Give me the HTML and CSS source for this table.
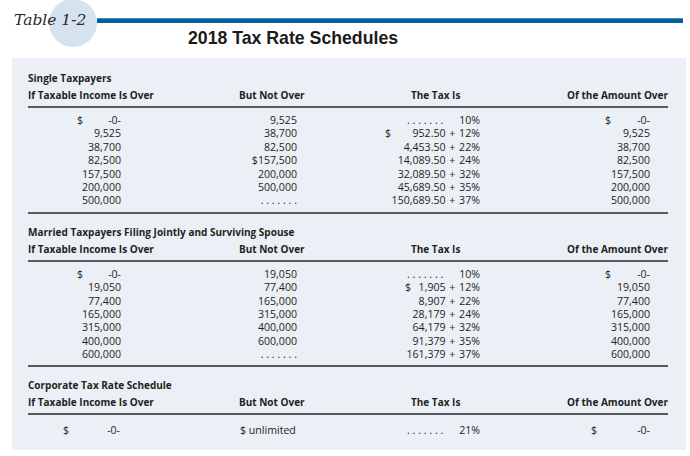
FILE: index.html
```html
<!DOCTYPE html>
<html>
<head>
<meta charset="utf-8">
<link rel="stylesheet" href="styles.css">
</head>
<body>
<div class="top">
  <div class="tagrow">
    <div class="tag"><span class="tag-text">Table 1-2</span></div>
    <div class="rule"></div>
  </div>
  <h1 class="title">2018 Tax Rate Schedules</h1>
</div>
<div class="panel">
  <section class="sec">
    <div class="sec-title">Single Taxpayers</div>
    <div class="grid head">
      <div class="h1">If Taxable Income Is Over</div>
      <div class="h2">But Not Over</div>
      <div class="h3">The Tax Is</div>
      <div class="h4">Of the Amount Over</div>
    </div>
    <div class="rows">
      <div class="grid row"><div class="c1"><span>$</span><span class="n">-0-</span></div><div class="c2">9,525</div><div class="c3 dot"><span class="dots">.......</span><span class="n">10%</span></div><div class="c4"><span>$</span><span class="n">-0-</span></div></div>
      <div class="grid row"><div class="c1"><span class="n">9,525</span></div><div class="c2">38,700</div><div class="c3 dl"><span>$</span><span class="n">952.50 + 12%</span></div><div class="c4"><span class="n">9,525</span></div></div>
      <div class="grid row"><div class="c1"><span class="n">38,700</span></div><div class="c2">82,500</div><div class="c3"><span class="n">4,453.50 + 22%</span></div><div class="c4"><span class="n">38,700</span></div></div>
      <div class="grid row"><div class="c1"><span class="n">82,500</span></div><div class="c2">$157,500</div><div class="c3"><span class="n">14,089.50 + 24%</span></div><div class="c4"><span class="n">82,500</span></div></div>
      <div class="grid row"><div class="c1"><span class="n">157,500</span></div><div class="c2">200,000</div><div class="c3"><span class="n">32,089.50 + 32%</span></div><div class="c4"><span class="n">157,500</span></div></div>
      <div class="grid row"><div class="c1"><span class="n">200,000</span></div><div class="c2">500,000</div><div class="c3"><span class="n">45,689.50 + 35%</span></div><div class="c4"><span class="n">200,000</span></div></div>
      <div class="grid row"><div class="c1"><span class="n">500,000</span></div><div class="c2"><span class="dots">.......</span></div><div class="c3"><span class="n">150,689.50 + 37%</span></div><div class="c4"><span class="n">500,000</span></div></div>
    </div>
  </section>

  <section class="sec">
    <div class="sec-title">Married Taxpayers Filing Jointly and Surviving Spouse</div>
    <div class="grid head">
      <div class="h1">If Taxable Income Is Over</div>
      <div class="h2">But Not Over</div>
      <div class="h3">The Tax Is</div>
      <div class="h4">Of the Amount Over</div>
    </div>
    <div class="rows">
      <div class="grid row"><div class="c1"><span>$</span><span class="n">-0-</span></div><div class="c2">19,050</div><div class="c3 dot"><span class="dots">.......</span><span class="n">10%</span></div><div class="c4"><span>$</span><span class="n">-0-</span></div></div>
      <div class="grid row"><div class="c1"><span class="n">19,050</span></div><div class="c2">77,400</div><div class="c3"><span class="n">$&nbsp;&nbsp;1,905 + 12%</span></div><div class="c4"><span class="n">19,050</span></div></div>
      <div class="grid row"><div class="c1"><span class="n">77,400</span></div><div class="c2">165,000</div><div class="c3"><span class="n">8,907 + 22%</span></div><div class="c4"><span class="n">77,400</span></div></div>
      <div class="grid row"><div class="c1"><span class="n">165,000</span></div><div class="c2">315,000</div><div class="c3"><span class="n">28,179 + 24%</span></div><div class="c4"><span class="n">165,000</span></div></div>
      <div class="grid row"><div class="c1"><span class="n">315,000</span></div><div class="c2">400,000</div><div class="c3"><span class="n">64,179 + 32%</span></div><div class="c4"><span class="n">315,000</span></div></div>
      <div class="grid row"><div class="c1"><span class="n">400,000</span></div><div class="c2">600,000</div><div class="c3"><span class="n">91,379 + 35%</span></div><div class="c4"><span class="n">400,000</span></div></div>
      <div class="grid row"><div class="c1"><span class="n">600,000</span></div><div class="c2"><span class="dots">.......</span></div><div class="c3"><span class="n">161,379 + 37%</span></div><div class="c4"><span class="n">600,000</span></div></div>
    </div>
  </section>

  <section class="sec last">
    <div class="sec-title">Corporate Tax Rate Schedule</div>
    <div class="grid head">
      <div class="h1">If Taxable Income Is Over</div>
      <div class="h2">But Not Over</div>
      <div class="h3">The Tax Is</div>
      <div class="h4">Of the Amount Over</div>
    </div>
    <div class="rows corp">
      <div class="grid row"><div class="c1 wide"><span>$</span><span class="n">-0-</span></div><div class="c2 left">$ unlimited</div><div class="c3 dot"><span class="dots">.......</span><span class="n">21%</span></div><div class="c4 wide"><span>$</span><span class="n">-0-</span></div></div>
    </div>
  </section>
</div>
</body>
</html>
```

FILE: styles.css
```css
html, body {
  margin: 0;
  padding: 0;
  background: #ffffff;
}
body {
  width: 690px;
  height: 456px;
  overflow: hidden;
  color: #231f20;
  font-family: "Open Sans", Lato, sans-serif;
}

.top {
  height: 58px;
}
.tagrow {
  display: flex;
  align-items: flex-start;
}
.tag {
  position: relative;
  width: 83px;
  height: 30px;
  padding-left: 14px;
}
.tag::before {
  content: "";
  position: absolute;
  left: 49px;
  top: -1px;
  width: 48px;
  height: 48px;
  border-radius: 50%;
  background: #d6e3ef;
}
.tag-text {
  position: relative;
  display: block;
  padding-top: 11px;
  font-family: "DejaVu Serif", "Liberation Serif", serif;
  font-style: italic;
  font-size: 15.5px;
  line-height: 18px;
  color: #2a2a2a;
  white-space: nowrap;
}
.rule {
  flex: 1;
  height: 5px;
  margin-top: 18px;
  margin-right: 7px;
  background: #00609c;
  border-top: 1px solid #4a8cc0;
  box-sizing: border-box;
}
.title {
  margin: -2px 0 0 188px;
  font-family: "Liberation Sans", Arial, sans-serif;
  font-weight: bold;
  font-size: 17.7px;
  line-height: 20px;
  color: #1e1a1b;
}

.panel {
  margin: 0 4px 0 12px;
  height: 392px;
  background: #ebeff6;
  padding: 13px 0 0 16px;
  box-sizing: border-box;
}
.sec {
  width: 640px;
  margin-bottom: 11px;
}
.sec-title {
  font-weight: bold;
  font-size: 10px;
  line-height: 14px;
}
.grid {
  display: grid;
  grid-template-columns: 205px 137px 170px 128px;
}
.head {
  margin-top: 3px;
  font-weight: bold;
  font-size: 10px;
  line-height: 14px;
  padding-bottom: 4px;
  border-bottom: 2px solid #58595b;
}
.h2 { padding-left: 6px; }
.h3 { padding-left: 41px; }
.h4 { text-align: right; }

.rows {
  padding: 6px 0 4px;
  border-bottom: 2px solid #58595b;
  font-size: 10.6px;
}
.rows.corp {
  border-bottom: none;
  padding-top: 9px;
}
.row {
  line-height: 13.4px;
  height: 13.4px;
}
.n { margin-left: auto; }
.c1 {
  display: flex;
  box-sizing: border-box;
  width: 93px;
  padding-left: 49px;
}
.c1.wide {
  width: 92px;
  padding-left: 35px;
}
.c2 {
  width: 64px;
  text-align: right;
}
.c2.left {
  width: auto;
  text-align: left;
  padding-left: 7px;
}
.c3 {
  display: flex;
  box-sizing: border-box;
  width: 110px;
  word-spacing: 1px;
}
.c3.dl { padding-left: 15px; }
.c3.dot { padding-left: 37px; word-spacing: 0; }
.c4 {
  display: flex;
  box-sizing: border-box;
  width: 110px;
  padding-left: 65px;
}
.c4.wide { padding-left: 51px; }
.dots {
  letter-spacing: 2.8px;
  margin-right: -2.8px;
}
```
